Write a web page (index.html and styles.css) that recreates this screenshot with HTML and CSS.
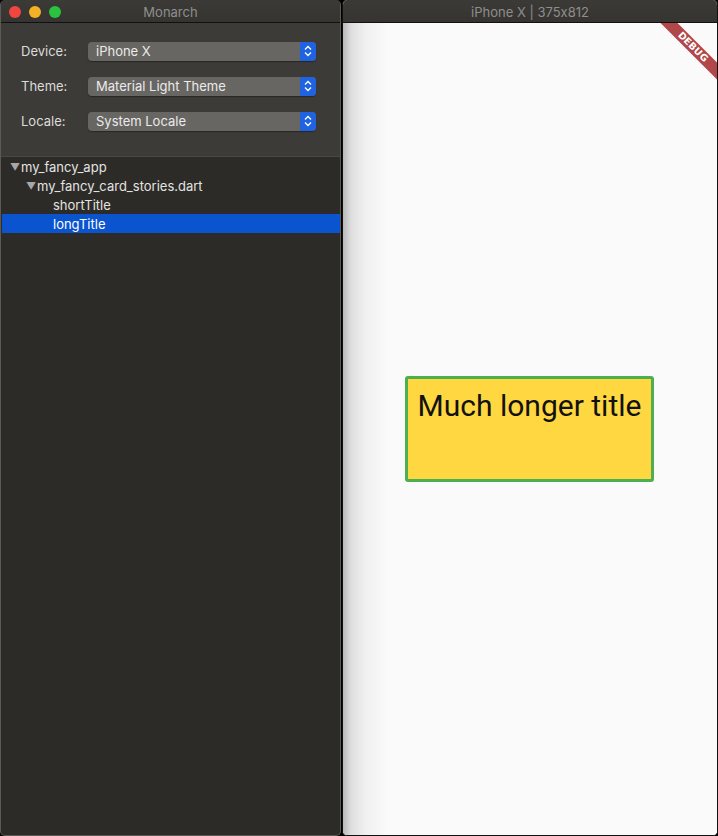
FILE: index.html
```html
<!DOCTYPE html>
<html>
<head>
<meta charset="utf-8">
<link rel="stylesheet" href="styles.css">
</head>
<body>
<div class="desk">
  <div class="win left">
    <div class="titlebar">
      <div class="lights">
        <span class="light red"></span>
        <span class="light yellow"></span>
        <span class="light green"></span>
      </div>
      <div class="title">Monarch</div>
    </div>
    <div class="controls">
      <div class="row">
        <span class="label">Device:</span>
        <div class="select"><span class="value">iPhone X</span><span class="arrow"><svg width="8" height="12" viewBox="0 0 8 12"><path d="M1 4.5 L4 1.5 L7 4.5 M1 7.5 L4 10.5 L7 7.5" fill="none" stroke="#fff" stroke-width="1.3"/></svg></span></div>
      </div>
      <div class="row">
        <span class="label">Theme:</span>
        <div class="select"><span class="value">Material Light Theme</span><span class="arrow"><svg width="8" height="12" viewBox="0 0 8 12"><path d="M1 4.5 L4 1.5 L7 4.5 M1 7.5 L4 10.5 L7 7.5" fill="none" stroke="#fff" stroke-width="1.3"/></svg></span></div>
      </div>
      <div class="row">
        <span class="label">Locale:</span>
        <div class="select"><span class="value">System Locale</span><span class="arrow"><svg width="8" height="12" viewBox="0 0 8 12"><path d="M1 4.5 L4 1.5 L7 4.5 M1 7.5 L4 10.5 L7 7.5" fill="none" stroke="#fff" stroke-width="1.3"/></svg></span></div>
      </div>
    </div>
    <div class="tree">
      <div class="node lvl0"><span class="tri">▼</span>my_fancy_app</div>
      <div class="node lvl1"><span class="tri">▼</span>my_fancy_card_stories.dart</div>
      <div class="node lvl2">shortTitle</div>
      <div class="node lvl2 selected">longTitle</div>
    </div>
  </div>
  <div class="win right">
    <div class="titlebar">
      <div class="title">iPhone X | 375x812</div>
    </div>
    <div class="screen">
      <div class="banner"><span>DEBUG</span></div>
      <div class="card">Much longer title</div>
    </div>
  </div>
</div>
</body>
</html>
```
FILE: styles.css
```css
html, body {
  margin: 0;
  padding: 0;
  background: #000;
}
body {
  width: 718px;
  height: 836px;
  overflow: hidden;
  font-family: Inter, "Liberation Sans", sans-serif;
  font-feature-settings: "calt" 0;
}
.desk {
  display: flex;
  height: 836px;
  gap: 1px;
}
.win {
  display: flex;
  flex-direction: column;
  border-radius: 5px;
  overflow: hidden;
  box-sizing: border-box;
}
.left {
  width: 341px;
  background: #2d2b27;
  border: 1px solid #5c5a57;
  border-top: none;
}
.right {
  flex: 1;
  background: #fafafa;
  border: 1px solid #111;
  border-top: none;
}
.titlebar {
  height: 22px;
  flex: none;
  background: linear-gradient(#3c3a37, #363431);
  border-bottom: 1px solid #111;
  display: flex;
  align-items: center;
  justify-content: center;
  position: relative;
  box-sizing: content-box;
}
.title {
  color: #8f8e8c;
  font-size: 13px;
  padding-top: 2px;
}
.lights {
  position: absolute;
  left: 8px;
  top: 6px;
  display: flex;
  gap: 8px;
}
.light {
  width: 12px;
  height: 12px;
  border-radius: 50%;
}
.red { background: #f0463f; }
.yellow { background: #f5b125; }
.green { background: #2ac33f; }
.controls {
  background: #3d3b37;
  padding: 18px 0 25px 20px;
  display: flex;
  flex-direction: column;
  gap: 15px;
  border-bottom: 1px solid #4a4845;
}
.row {
  display: flex;
  align-items: center;
  height: 20px;
}
.label {
  width: 67px;
  color: #dcdcda;
  font-size: 13px;
}
.select {
  width: 228px;
  height: 19px;
  display: flex;
  align-items: center;
  background: #686663;
  border-radius: 4px;
  box-shadow: 0 1px 1px rgba(0,0,0,0.35);
  overflow: hidden;
}
.value {
  flex: 1;
  padding-left: 8px;
  color: #ebebea;
  font-size: 13px;
}
.arrow {
  width: 16px;
  height: 19px;
  background: #1f63e0;
  display: flex;
  align-items: center;
  justify-content: center;
}
.tree {
  display: flex;
  flex-direction: column;
}
.node {
  height: 19px;
  display: flex;
  align-items: center;
  color: #e3e3e1;
  font-size: 13px;
  margin-left: 1px;
}
.tri {
  font-size: 10px;
  color: #a8a7a5;
  width: 11px;
}
.lvl0 { padding-left: 8px; }
.lvl1 { padding-left: 24px; }
.lvl2 { padding-left: 51px; }
.selected {
  background: #0a54cf;
  color: #fff;
}
.screen {
  flex: 1;
  position: relative;
  display: flex;
  justify-content: center;
  padding-top: 353px;
  background: linear-gradient(to right, #b8b8b8 0px, #dedede 8px, #f0f0f0 22px, #fafafa 45px);
}
.card {
  width: 249px;
  height: 106px;
  box-sizing: border-box;
  margin-right: 1px;
  background: #ffd740;
  border: 3px solid #4cb050;
  border-radius: 3px;
  font-family: Roboto, sans-serif;
  font-size: 30px;
  color: #111;
  text-align: center;
  padding-top: 9px;
}
.banner {
  position: absolute;
  top: 0;
  right: 0;
  width: 100px;
  height: 100px;
  overflow: hidden;
}
.banner span {
  position: absolute;
  top: 18px;
  right: -16px;
  width: 80px;
  height: 12px;
  background: #b14749;
  transform: rotate(45deg);
  color: #fff;
  font-family: "DejaVu Sans", sans-serif;
  font-weight: bold;
  font-size: 9.5px;
  line-height: 12px;
  text-align: center;
  letter-spacing: 0.2px;
}
```
